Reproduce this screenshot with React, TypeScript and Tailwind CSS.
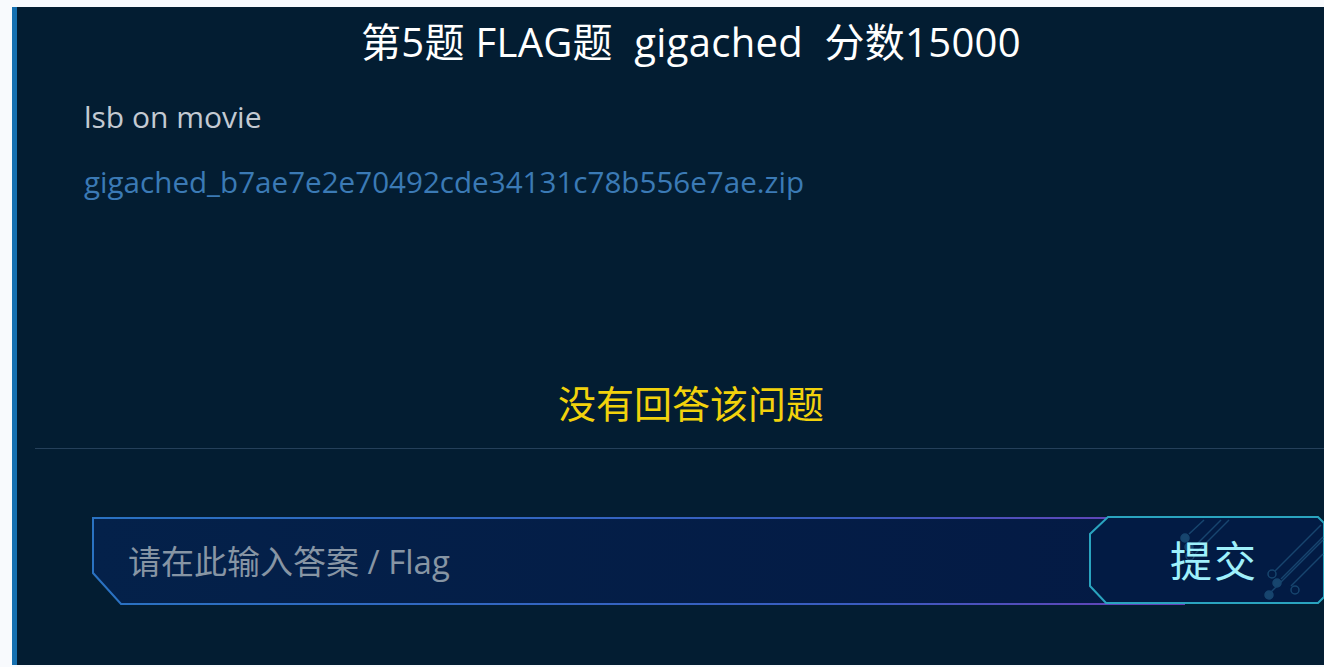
import React from "react";

const font = {
  fontFamily: '"Open Sans", "Noto Sans CJK SC", sans-serif',
};

// cut-corner frame for the answer input
const InputFrame = () => (
  <svg
    className="absolute inset-0 w-full h-full"
    viewBox="0 0 1093 89"
    preserveAspectRatio="none"
  >
    <defs>
      <linearGradient id="edge" x1="0" y1="0" x2="1" y2="0">
        <stop offset="0%" stopColor="#2a72c2" />
        <stop offset="70%" stopColor="#3a5cc0" />
        <stop offset="100%" stopColor="#6a3fb6" />
      </linearGradient>
      <linearGradient id="fill" x1="0" y1="0" x2="1" y2="0">
        <stop offset="0%" stopColor="#04214a" />
        <stop offset="100%" stopColor="#041a44" />
      </linearGradient>
    </defs>
    <polygon
      points="1,1 1092,1 1092,87 29,87 1,56"
      fill="url(#fill)"
      stroke="url(#edge)"
      strokeWidth="2"
    />
  </svg>
);

const SubmitFrame = () => (
  <svg className="absolute inset-0 w-full h-full" viewBox="0 0 236 88">
    <polygon
      points="19,1 229,1 235,7 235,81 229,87 17,87 1,70 1,18"
      fill="#021b44"
      stroke="#2aa4bf"
      strokeWidth="2"
    />
    {/* circuit lines */}
    <g stroke="#17456e" strokeWidth="1.5" fill="none">
      <line x1="100" y1="18" x2="115" y2="4" />
      <line x1="108" y1="28" x2="132" y2="4" />
      <line x1="104" y1="40" x2="140" y2="4" />
      <circle cx="96" cy="22" r="4" fill="#17456e" />
      <circle cx="100" cy="31" r="4" fill="#17456e" />
      <circle cx="101" cy="40" r="4" />
      <line x1="186" y1="55" x2="232" y2="9" />
      <line x1="192" y1="63" x2="234" y2="21" />
      <line x1="202" y1="70" x2="234" y2="38" />
      <line x1="180" y1="78" x2="234" y2="24" />
      <circle cx="183" cy="58" r="4" />
      <circle cx="188" cy="67" r="4" fill="#17456e" />
      <circle cx="206" cy="74" r="4" />
      <circle cx="180" cy="79" r="4" fill="#17456e" />
    </g>
  </svg>
);

export default function App() {
  return (
    <div className="w-full h-[667px] overflow-hidden bg-[#f8fafd] pt-[7px] pl-[12px]" style={font}>
      <div className="w-[1353px] h-[658px] bg-[#031d32] border-l-[5px] border-[#1670b0] flex flex-col">
        <h1 className="mt-[11px] text-center text-[40px] leading-[48px] text-white whitespace-pre tracking-[0.3px]">
          第5题 FLAG题  gigached  分数15000
        </h1>

        <div className="pl-[67px]">
          <p className="mt-[33px] text-[30px] leading-[36px] text-[#c3cad2]">lsb on movie</p>
          <a className="block mt-[29px] text-[29.6px] leading-[36px] text-[#3b7ab5]">
            gigached_b7ae7e2e70492cde34131c78b556e7ae.zip
          </a>
        </div>

        <p className="mt-[179px] text-center text-[38px] leading-[48px] text-[#f2d20c]">
          没有回答该问题
        </p>

        <div className="mt-[21px] ml-[18px] h-px bg-[#25405a]" />

        <div className="mt-[68px] pl-[75px] flex items-start">
          <div className="relative w-[1093px] h-[89px] flex items-center">
            <InputFrame />
            <input
              className="relative w-[980px] bg-transparent outline-none pl-[36px] text-[33px] text-[#c6d2de] placeholder:text-[#8795a4]"
              style={font}
              placeholder="请在此输入答案 / Flag"
            />
          </div>
          <button className="relative -ml-[96px] -mt-px w-[236px] h-[88px] flex items-center justify-center pl-[14px] cursor-pointer">
            <SubmitFrame />
            <span className="relative text-[42px] text-[#9ff0fb] tracking-[2px]">提交</span>
          </button>
        </div>
      </div>
    </div>
  );
}
